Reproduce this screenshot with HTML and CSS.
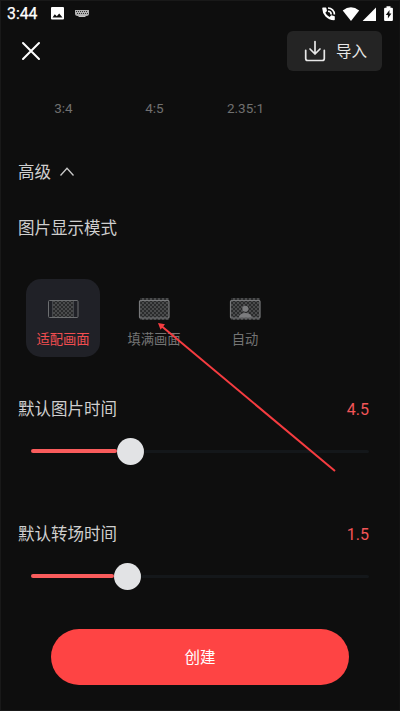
FILE: index.html
```html
<!DOCTYPE html>
<html lang="zh-CN">
<head>
<meta charset="utf-8">
<title>创建</title>
<link rel="stylesheet" href="styles.css">
</head>
<body>
<main class="screen">
  <div class="status">
    <span class="clock">3:44</span>
    <svg class="status-left" width="42" height="16" viewBox="0 0 42 16">
      <path fill="#fff" fill-rule="evenodd" d="M2 1h11q1 0 1 1v10.500q0 1-1 1H2q-1 0-1-1V2q0-1 1-1zM2.500 11.500h10L9.200 7.500 6.800 10.300 4.800 8.300z"/>
      <path fill="#b4b4b4" d="M25 4h14v4q0 1.500-2 2h-10q-2-.5-2-2z"/>
      <path stroke="#333" stroke-width="1" stroke-dasharray="1 1" d="M26 5.500h12M27 7.500h11"/>
      <path stroke="#c4c4c4" d="M28.500 10.500h7"/>
    </svg>
    <svg class="status-right" width="74" height="18" viewBox="0 0 74 18">
      <path fill="#fff" d="M3 2.500h2.600q.7 0 .8.700l.6 2.800-1.700 1.700q1.500 3 4.300 4.300l1.700-1.700 2.800.6q.7.200.7.900v2.700q0 .7-.8.700Q9 15.200 5.500 11.500 2.300 8 2.200 3.300 2.200 2.500 3 2.500z"/>
      <path fill="none" stroke="#fff" stroke-width="1.600" d="M8 3c3.600 0 6.400 2.800 6.400 6.400M8 6.200c2 0 3.200 1.200 3.200 3.200"/>
      <path fill="#fff" d="M22.700 5.400q8.200-6.300 16.500 0L31 16z"/>
      <path fill="#fff" d="M56 2.600V16H42.600z"/>
      <path fill="#fff" fill-rule="evenodd" d="M66.500 1.300h4v1.400h1.400q1 0 1 1v11.300q0 1-1 1h-6.800q-1 0-1-1V3.700q0-1 1-1h1.400zM69.500 5l-3.700 5.100h2.100V13.500l3.500-5h-2z"/>
    </svg>
  </div>

  <header class="header">
    <svg width="22" height="22" viewBox="0 0 22 22"><path d="M3 3l16 16M19 3L3 19" stroke="#fff" stroke-width="2" stroke-linecap="round"/></svg>
    <button class="import">
      <svg width="22" height="24" viewBox="0 0 22 24" fill="none" stroke="#e8e8e8" stroke-width="1.700" stroke-linecap="round" stroke-linejoin="round"><path d="M11 2.500v12.500M6 10l5 5 5-5M1.700 11.300v8.200q0 2 2 2h14.600q2 0 2-2v-8.200"/></svg>
      <span>导入</span>
    </button>
  </header>

  <div class="ratios"><span>3:4</span><span>4:5</span><span>2.35:1</span></div>

  <div class="advanced">
    <span>高级</span>
    <svg width="16" height="10" viewBox="0 0 16 10"><path d="M1.500 8.500L8 1.200l6.500 7.300" fill="none" stroke="#c8c8c8" stroke-width="1.300"/></svg>
  </div>
  <h2 class="mode-title">图片显示模式</h2>

  <div class="modes">
    <div class="mode selected">
      <svg width="34" height="24" viewBox="0 0 34 24">
        <defs><pattern id="mesh" width="4" height="4" patternUnits="userSpaceOnUse"><path fill="#2a2b2c" d="M0 0h4v4H0z"/><path d="M0 0l4 4M4 0L0 4" stroke="#4e4f50" stroke-width=".9"/></pattern></defs>
        <rect x="7" y="3" width="20" height="18" fill="url(#mesh)"/>
        <rect x="2.500" y="3.500" width="29.500" height="17" rx="1" fill="none" stroke="#6c6e70"/>
        <path d="M6.500 4v16M27.500 4v16" stroke="#45474b"/>
      </svg>
      <span>适配画面</span>
    </div>
    <div class="mode">
      <svg width="34" height="24" viewBox="0 0 34 24">
        <rect x="3" y="1" width="29" height="22" fill="url(#mesh)"/>
        <rect x="2.500" y="3.500" width="29.500" height="17.500" rx="1" fill="none" stroke="#77787a" stroke-width="1.200"/>
      </svg>
      <span>填满画面</span>
    </div>
    <div class="mode">
      <svg width="34" height="24" viewBox="0 0 34 24">
        <rect x="3" y="1" width="29" height="22" fill="url(#mesh)"/>
        <rect x="2.500" y="3.500" width="29.500" height="17.500" rx="1" fill="none" stroke="#77787a" stroke-width="1.200"/>
        <circle cx="17.300" cy="11.700" r="3" fill="#7b7c7e"/><path d="M10.800 20.500q.7-4.500 6.500-4.500t6.500 4.500z" fill="#7b7c7e"/>
      </svg>
      <span>自动</span>
    </div>
  </div>

  <section class="setting">
    <div class="setting-head"><h2>默认图片时间</h2><output>4.5</output></div>
    <div class="slider"><i class="fill photo"></i><i class="knob"></i><i class="rest"></i></div>
  </section>
  <section class="setting">
    <div class="setting-head"><h2>默认转场时间</h2><output>1.5</output></div>
    <div class="slider"><i class="fill transition"></i><i class="knob"></i><i class="rest"></i></div>
  </section>

  <button class="create">创建</button>

  <svg class="pointer" width="184" height="156" viewBox="0 0 184 156">
    <path d="M4 4.500L177 149" stroke="#f53c40" stroke-width="2"/>
    <path d="M0 1l7 1.300-4.500 5.400z" fill="#f53c40"/>
  </svg>
</main>
</body>
</html>
```

FILE: styles.css
```css
* { box-sizing: border-box; }
body { margin: 0; background: #0e0e0e; }
h2 { margin: 0; font-size: inherit; font-weight: 400; }
button { border: 0; padding: 0; font: inherit; color: inherit; }
svg { display: block; flex: none; }

.screen {
  position: relative;
  width: 400px;
  height: 711px;
  overflow: hidden;
  display: flex;
  flex-direction: column;
  border: 1px solid #191919;
  border-right-color: #121212;
  background: #0e0e0e;
  color: #cfcfcf;
  font: 16.5px/24px Roboto, "Noto Sans CJK SC", sans-serif;
}
.status {
  height: 30px;
  padding: 4px 5px 0 6px;
  display: flex;
  align-items: flex-start;
}
.clock {
  width: 43px;
  color: #fff;
  font-size: 15.8px;
  font-weight: 400;
  -webkit-text-stroke: .25px #fff;
  line-height: 18px;
}
.status-left { margin-top: 1px; }
.status-right { margin-left: auto; }
.header {
  height: 40px;
  padding: 0 17px 0 19px;
  display: flex;
  align-items: center;
  justify-content: space-between;
}
.import {
  width: 95px;
  height: 40px;
  padding-left: 17px;
  display: flex;
  align-items: center;
  gap: 10px;
  border-radius: 6px;
  background: #242424;
  color: #e8e8e8;
  font-size: 15.5px;
}
.import span { padding-top: 2px; }
.ratios {
  margin: 25px 0 0 17px;
  display: grid;
  grid-template-columns: repeat(3, 91px);
  text-align: center;
  color: #707070;
  font-size: 13.5px;
}
.advanced {
  margin: 41px 0 0 17px;
  display: flex;
  align-items: center;
  gap: 8px;
}
.advanced svg { margin-top: -2px; }
.mode-title { margin: 32px 0 0 17px; }
.modes {
  margin: 38px 0 0 25px;
  display: flex;
  gap: 17px;
}
.mode {
  width: 74px;
  height: 78px;
  padding-top: 18px;
  display: flex;
  flex-direction: column;
  align-items: center;
  gap: 7px;
  border-radius: 15px;
  color: #747474;
  font-size: 13.3px;
  white-space: nowrap;
}
.selected { background: #202127; color: #f24e50; }
.setting { height: 125px; padding: 0 30px 0 17px; }
.modes + .setting { margin-top: 41px; }
.setting-head { display: flex; justify-content: space-between; }
.setting-head output { color: #f25557; font-size: 16px; }
.slider {
  height: 28px;
  margin: 15px 0 0 13px;
  display: flex;
  align-items: center;
}
.fill { height: 4px; border-radius: 2px; background: #f95c5c; }
.photo { width: 86px; }
.transition { width: 83px; }
.knob { width: 27px; height: 27px; border-radius: 50%; background: #e2e3e5; }
.rest { flex: 1; height: 3px; border-radius: 2px; background: #14171a; }
.create {
  width: 298px;
  height: 56px;
  margin: -19px 0 0 50px;
  padding-top: 2px;
  border-radius: 28px;
  background: #fe4444;
  color: #fff;
  font-size: 15.5px;
}
.pointer { position: absolute; left: 157px; top: 321px; }
```
